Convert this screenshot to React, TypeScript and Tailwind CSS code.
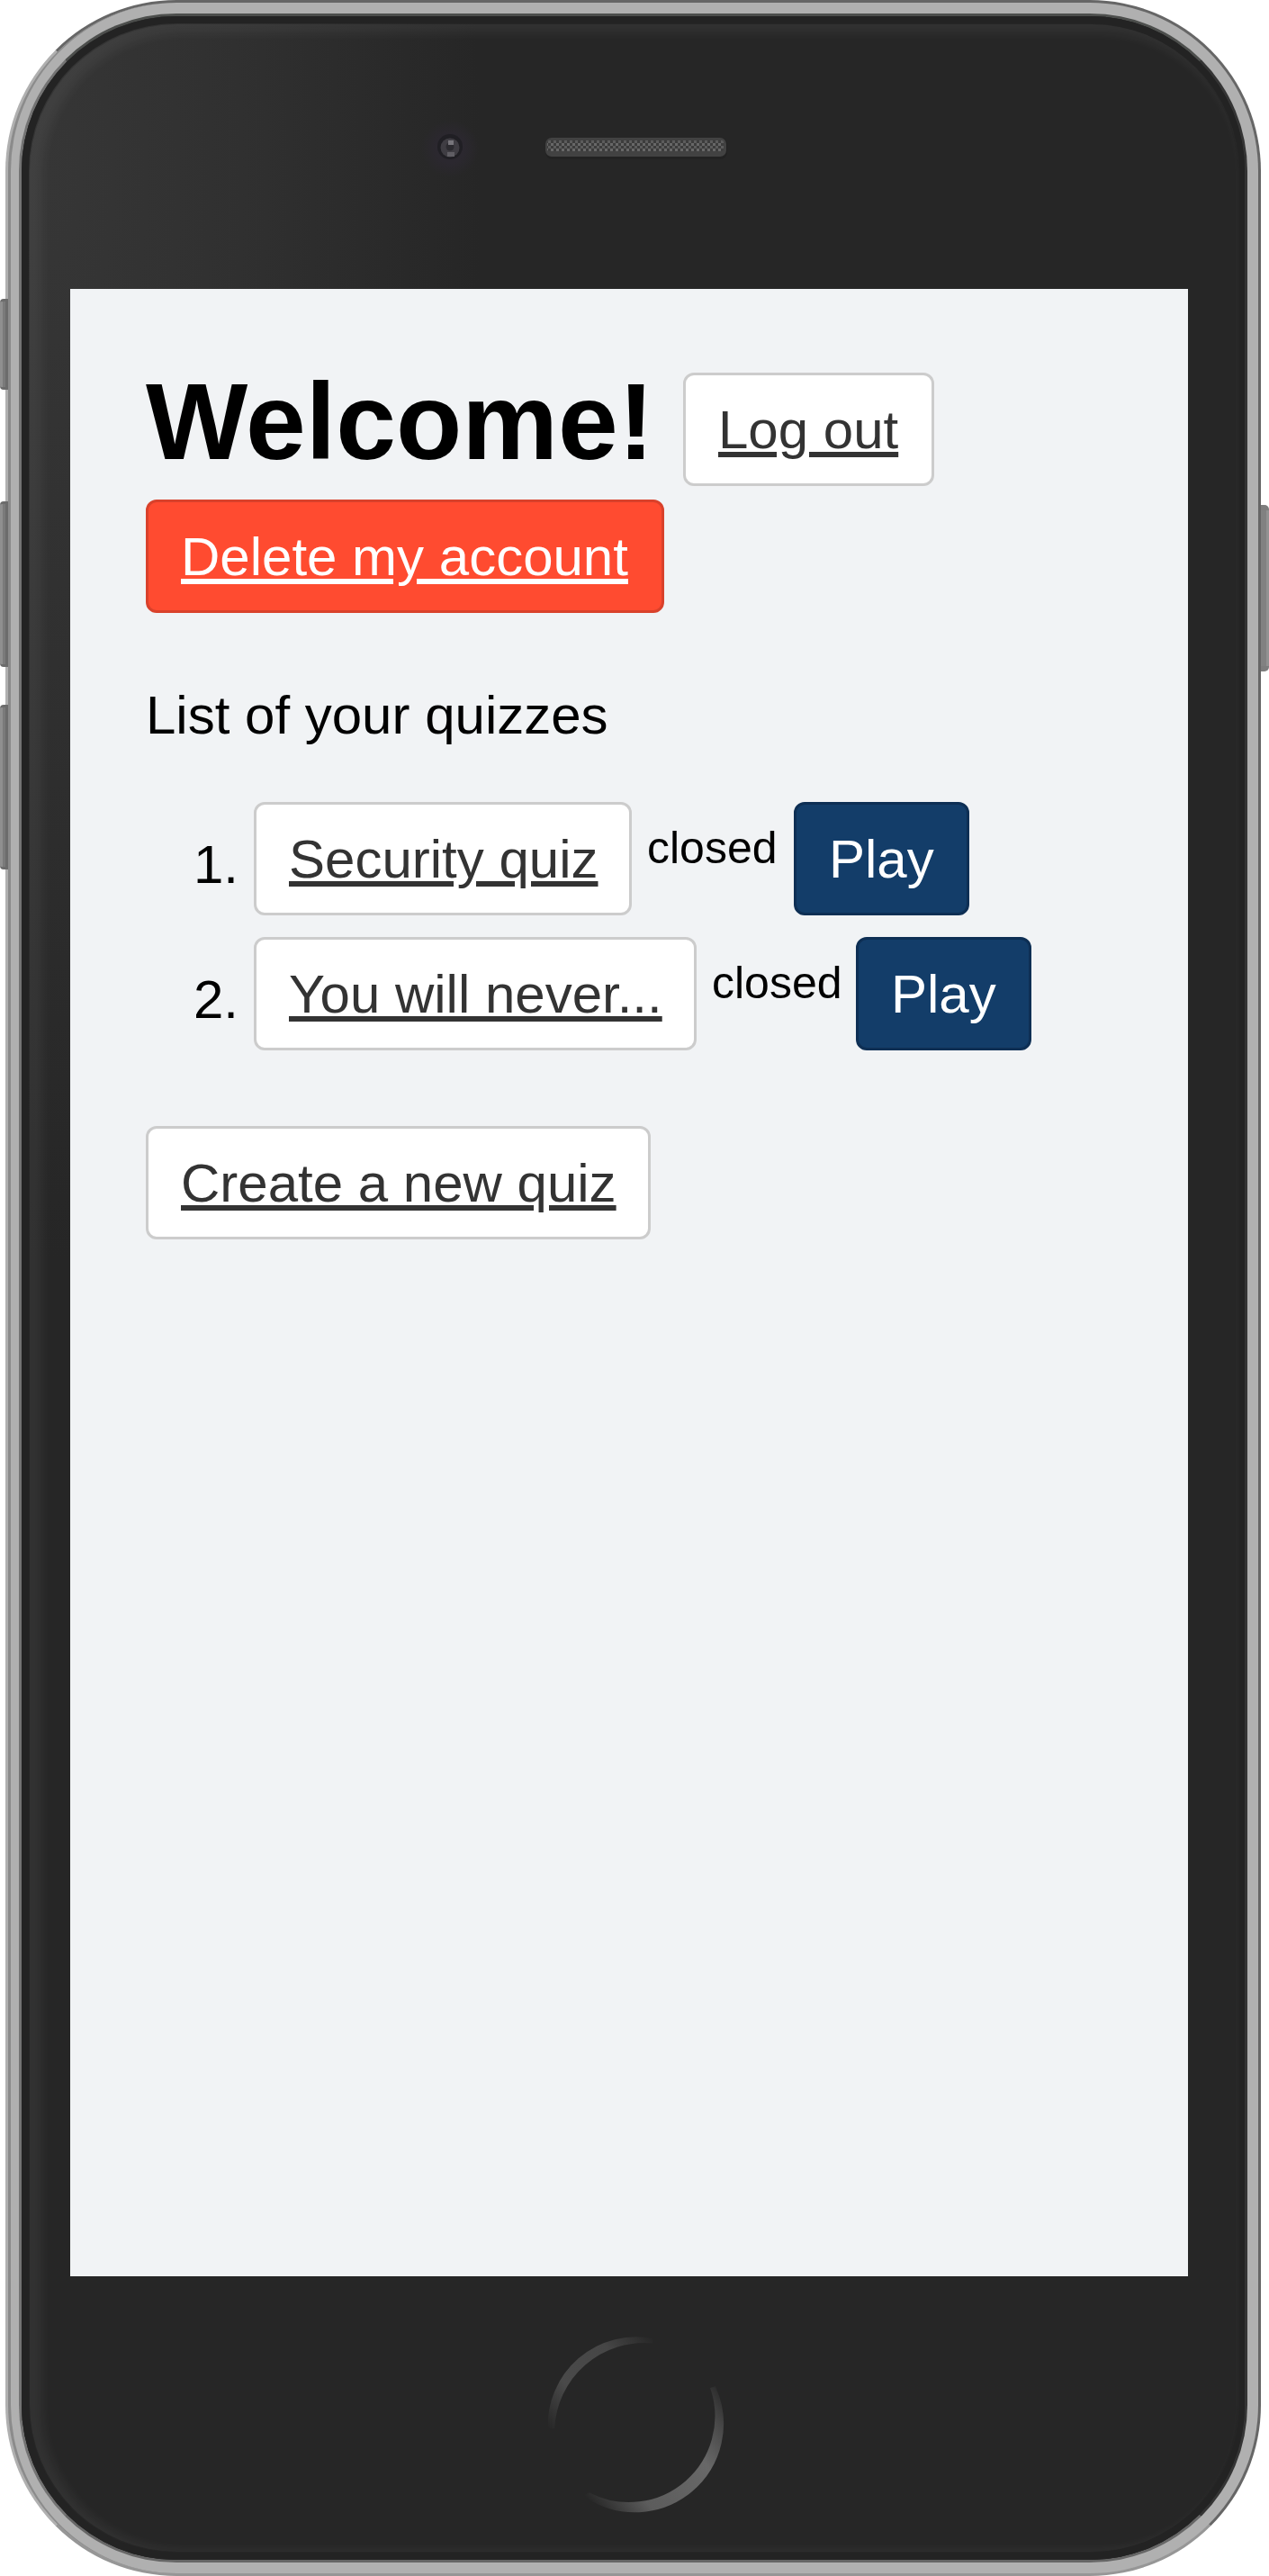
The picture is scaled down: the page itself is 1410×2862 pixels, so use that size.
import type { ReactNode } from "react";

type Tone = "light" | "danger" | "primary";

const tones: Record<Tone, string> = {
  light: "border-[#cccccc] bg-white text-[#333333] underline",
  danger: "border-[#d9412b] bg-[#ff4b30] text-white underline",
  primary: "border-[#0e2f54] bg-[#133d69] text-white",
};

function Button({ tone = "light", className = "", children }: { tone?: Tone; className?: string; children: ReactNode }) {
  return (
    <a
      className={`block h-[126px] shrink-0 rounded-[12px] border-[3px] pl-9 text-[60px] leading-[121px] whitespace-nowrap decoration-[6px] underline-offset-[4px] ${tones[tone]} ${className}`}
    >
      {children}
    </a>
  );
}

function QuizRow({ index, title, titleWidth, statusWidth }: { index: number; title: string; titleWidth: string; statusWidth: string }) {
  return (
    <li className="flex h-[126px] items-start">
      <span className="mr-[17px] w-[103px] text-right text-[60px] leading-[139px]">{index}.</span>
      <Button className={titleWidth}>{title}</Button>
      <span className={`pl-[17px] text-[50px] leading-[102px] ${statusWidth}`}>closed</span>
      <Button tone="primary" className="w-[195px]">Play</Button>
    </li>
  );
}

function Camera() {
  return (
    <svg width="68" height="68" viewBox="0 0 68 68">
      <defs>
        <radialGradient id="haze">
          <stop offset="0.5" stopColor="#2b282f" />
          <stop offset="1" stopColor="#2b282f" stopOpacity="0" />
        </radialGradient>
      </defs>
      <circle cx="34" cy="32" r="32" fill="url(#haze)" />
      <circle cx="34" cy="30" r="14" fill="#201f24" />
      <circle cx="34" cy="31" r="10.5" fill="#3f3d43" />
      <circle cx="34" cy="30" r="4.5" fill="#2c2b30" />
      <rect x="32" y="23" width="6" height="5" fill="#77757b" />
      <rect x="31" y="36" width="8" height="5" fill="#605e64" />
    </svg>
  );
}

function Speaker() {
  return (
    <svg width="202" height="24" viewBox="0 0 202 24">
      <defs>
        <pattern id="mesh" width="6" height="6" patternUnits="userSpaceOnUse">
          <rect width="6" height="6" fill="#3c3c3c" />
          <rect width="3" height="3" fill="#686868" />
          <rect x="3" y="3" width="3" height="3" fill="#5c5c5c" />
        </pattern>
      </defs>
      <rect width="202" height="24" rx="8" fill="#222222" />
      <rect width="201" height="21" rx="7" fill="#424242" />
      <rect x="2" y="3" width="196" height="12" rx="2" fill="url(#mesh)" />
    </svg>
  );
}

function HomeButton() {
  return (
    <svg width="212" height="212" viewBox="0 0 212 212">
      <defs>
        <linearGradient id="arcA" gradientUnits="userSpaceOnUse" x1="10" y1="112" x2="126" y2="10">
          <stop offset="0" stopColor="#262626" />
          <stop offset="0.3" stopColor="#4a4a4a" />
          <stop offset="0.7" stopColor="#464646" />
          <stop offset="1" stopColor="#262626" />
        </linearGradient>
        <linearGradient id="arcB" gradientUnits="userSpaceOnUse" x1="50" y1="186" x2="202" y2="64">
          <stop offset="0" stopColor="#262626" />
          <stop offset="0.25" stopColor="#5c5c5c" />
          <stop offset="0.65" stopColor="#686868" />
          <stop offset="0.85" stopColor="#484848" />
          <stop offset="1" stopColor="#262626" />
        </linearGradient>
      </defs>
      <path d="M10 110 A97 97 0 0 1 124 12 L124 15 A101 101 0 0 0 15 110 Z" fill="url(#arcA)" stroke="url(#arcA)" strokeWidth="2.5" />
      <path d="M51 186 A97 97 0 0 0 194 66 L191 67 A97 97 0 0 1 55 184 Z" fill="url(#arcB)" stroke="url(#arcB)" strokeWidth="3" />
    </svg>
  );
}

function SideButton({ className }: { className: string }) {
  return (
    <div className={`w-[9px] rounded-l-[4px] border-y-[3px] border-r-[3px] border-[#6c6c6c] bg-[linear-gradient(to_right,#8f8f8f_50%,#7a7a7a_50%)] ${className}`} />
  );
}

export default function App() {
  return (
    <main className="relative h-[2862px] w-[1410px] overflow-hidden bg-white pl-[6px] font-['Liberation_Sans',Arial,sans-serif] text-black">
      {/* Metal rim */}
      <div className="h-[2862px] w-[1395px] rounded-[190px] border-[3px] border-t-[#666666] border-r-[#666666] border-b-[#969696] border-l-[#b0b0b0] bg-[#b0b0b0]">
        <div className="h-[2856px] w-[1389px] rounded-[187px] border-l-[3px] border-[#8b8b8b] pt-[12px] pl-[9px]">
          {/* Glass face */}
          <div className="relative h-[2832px] w-[1365px] rounded-[175px] border-[3px] border-t-[#4c4e4c] border-r-[#343434] border-b-[#666666] border-l-[#737373] bg-[#262626]">
            <div className="absolute inset-0 rounded-[172px] bg-[radial-gradient(ellipse_480px_1200px_at_30px_180px,#363636_0%,#303030_45%,#262626_100%)]" />
            <div className="absolute inset-0 rounded-[172px] shadow-[inset_0_0_0_8px_#232323]" />
            <div className="absolute top-[9px] right-[6px] bottom-[9px] left-[9px] rounded-[164px] shadow-[inset_8px_4px_12px_6px_rgba(255,255,255,0.055)]" />

            <div className="relative flex h-[303px] items-start pt-[115px] pl-[442px]">
              <Camera />
              <div className="pt-5 pl-[72px]">
                <Speaker />
              </div>
            </div>

            <section className="relative ml-[54px] h-[2208px] w-[1242px] bg-[#f1f3f5] pt-[93px] pl-[84px]">
              <header className="flex flex-col gap-[15px]">
                <div className="flex items-start">
                  <h1 className="w-[597px] text-[120px] leading-[109px] font-bold">Welcome!</h1>
                  <Button className="w-[279px]">Log out</Button>
                </div>
                <Button tone="danger" className="w-[576px]">Delete my account</Button>
              </header>

              <p className="pt-[84px] pb-[66px] text-[60px] leading-[60px]">List of your quizzes</p>

              <ol className="flex flex-col gap-6 pb-[84px]">
                <QuizRow index={1} title="Security quiz" titleWidth="w-[420px]" statusWidth="w-[180px]" />
                <QuizRow index={2} title="You will never..." titleWidth="w-[492px]" statusWidth="w-[177px]" />
              </ol>

              <Button className="w-[561px]">Create a new quiz</Button>
            </section>

            <div className="relative flex pt-[58px] pl-[576px]">
              <HomeButton />
            </div>
          </div>
        </div>
      </div>

      {/* Hardware buttons on both edges */}
      <div className="absolute inset-y-0 left-0 flex flex-col pt-[332px]">
        <SideButton className="h-[101px]" />
        <SideButton className="mt-[124px] h-[184px]" />
        <SideButton className="mt-[42px] h-[183px]" />
      </div>
      <div className="absolute inset-y-0 right-0 pt-[561px]">
        <div className="h-[185px] w-[9px] rounded-r-[5px] border-y-[6px] border-[#7d7d7d] bg-[linear-gradient(to_right,#818181_66%,#929292_66%)]" />
      </div>
    </main>
  );
}
